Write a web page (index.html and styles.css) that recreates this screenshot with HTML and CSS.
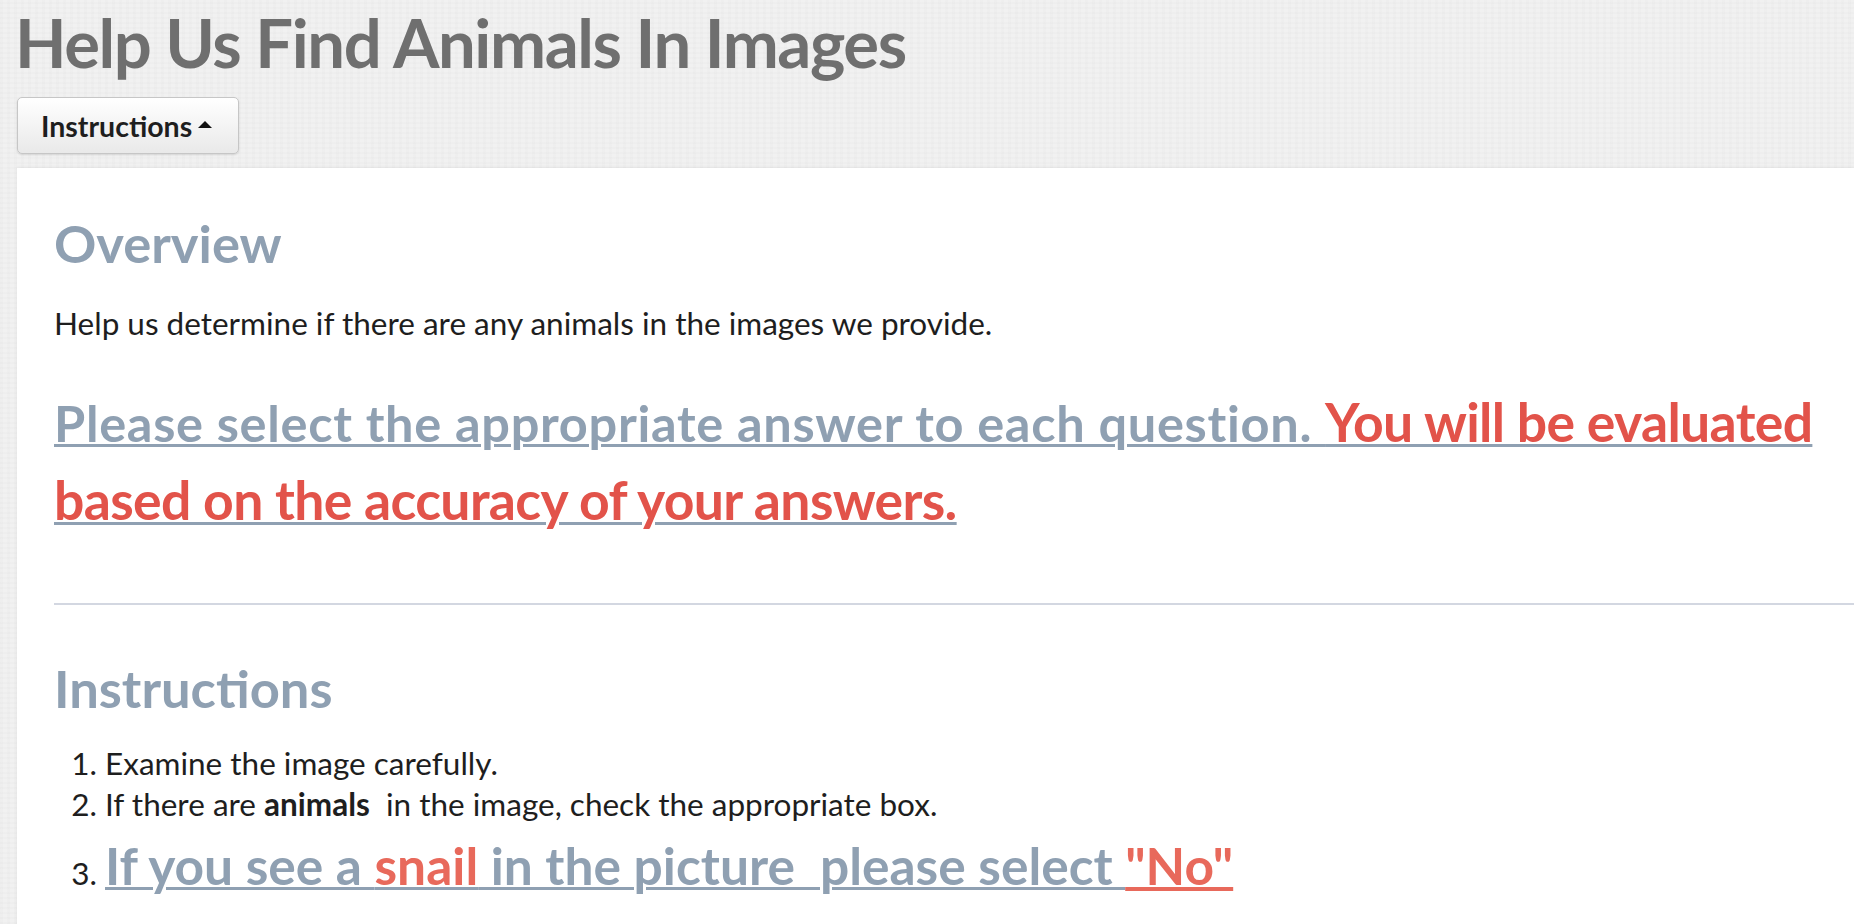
FILE: index.html
```html
<!DOCTYPE html>
<html lang="en">
<head>
<meta charset="utf-8">
<title>Help Us Find Animals In Images</title>
<link rel="stylesheet" href="styles.css">
</head>
<body>
<div class="page">
  <h1 class="title">Help Us Find Animals In Images</h1>
  <button class="toggle" type="button">Instructions <span class="caret"></span></button>
  <div class="panel">
    <h2 class="heading">Overview</h2>
    <p class="text">Help us determine if there are any animals in the images we provide.</p>
    <p class="notice"><u class="ul-gray">Please select the appropriate answer to each question. <span class="red">You will be evaluated based on the accuracy of your answers.</span></u></p>
    <hr class="rule">
    <h2 class="heading">Instructions</h2>
    <ol class="steps">
      <li>Examine the image carefully.</li>
      <li>If there are <b>animals</b>&nbsp; in the image, check the appropriate box.</li>
      <li class="big-step"><u class="ul-gray big">If you see a <span class="salmon">snail</span> in the picture &nbsp;please select </u><u class="ul-red big salmon">"No"</u></li>
    </ol>
  </div>
</div>
</body>
</html>
```

FILE: styles.css
```css
html, body {
  margin: 0;
  padding: 0;
}
body {
  background-color: #f1f1f1;
  background-image:
    repeating-linear-gradient(90deg, rgba(0,0,0,0.01) 0 3px, rgba(255,255,255,0.025) 3px 7px),
    repeating-linear-gradient(0deg, rgba(0,0,0,0.012) 0 2px, rgba(255,255,255,0.025) 2px 5px);
  font-family: Lato, "Open Sans", "Liberation Sans", sans-serif;
  color: #1e1e1e;
  overflow: hidden;
}
.page {
  padding: 0 0 0 17px;
}
.title {
  margin: 0 0 13px -2px;
  font-size: 67px;
  line-height: 84px;
  font-weight: 700;
  letter-spacing: -1.4px;
  color: #6f6f6f;
}
.toggle {
  display: flex;
  align-items: center;
  gap: 6px;
  width: 222px;
  height: 57px;
  margin: 0 0 14px 0;
  padding: 0 0 0 23px;
  border: 1px solid #c6c6c6;
  border-radius: 5px;
  background: linear-gradient(#ffffff, #e9e9e9);
  box-shadow: 0 1px 2px rgba(0,0,0,0.12);
  font-family: Lato, "Open Sans", sans-serif;
  font-size: 28.5px;
  font-weight: 700;
  color: #1e1e1e;
}
.caret {
  width: 0;
  height: 0;
  border-left: 7px solid transparent;
  border-right: 7px solid transparent;
  border-bottom: 7px solid #111;
  margin-top: -3px;
}
.panel {
  background: #fff;
  padding: 46px 0 60px 37px;
  box-shadow: 0 -1px 3px rgba(0,0,0,0.05);
  min-height: 700px;
}
.heading {
  margin: 0;
  font-size: 52.5px;
  line-height: 58px;
  font-weight: 700;
  color: #8fa0b2;
}
.text {
  margin: 31px 0 0;
  font-size: 31.5px;
  line-height: 41px;
}
.notice {
  margin: 39px 0 0;
  font-size: 50.5px;
  line-height: 76px;
  font-weight: 700;
  letter-spacing: 0.7px;
  color: #8fa0b2;
}
.ul-gray {
  text-decoration: underline;
  text-decoration-color: #8fa0b2;
  text-decoration-thickness: 3px;
}
.ul-red {
  text-decoration: underline;
  text-decoration-color: #e8695b;
  text-decoration-thickness: 4px;
}
.red {
  color: #e2534a;
  font-size: 53.5px;
  letter-spacing: -0.65px;
}
.rule {
  margin: 64px 0 54px;
  border: 0;
  height: 2px;
  background: #d3d7e1;
}
.steps {
  margin: 26px 0 0;
  padding: 0 0 0 51px;
  font-size: 31.5px;
  line-height: 41px;
}
.big-step {
  line-height: 1.35;
  margin-top: 6px;
}
.big {
  font-size: 51.5px;
  font-weight: 700;
  color: #8fa0b2;
}
.salmon {
  color: #e8695b;
}
```
